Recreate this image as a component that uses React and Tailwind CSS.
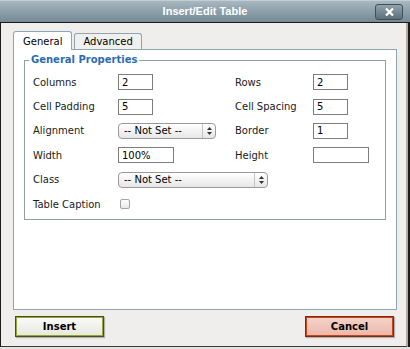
import React from 'react';

/* ── small form pieces ─────────────────────────────── */
function TextBox({ value = '', width }) {
    return (
        <input
            type="text"
            value={value}
            readOnly
            className={`${width} h-[16px] border border-[#7d7d7d] bg-white pl-[3px] text-[10px] leading-[14px] text-black outline-none`}
        />
    );
}

function SelectBox({ width, label = '-- Not Set --' }) {
    return (
        <div
            className={`${width} h-[16px] flex items-center rounded-[4px] border border-[#9a9a9a] bg-gradient-to-b from-white to-[#e6e6e6] text-[10px] text-black`}
        >
            <span className="flex-1 pl-[5px] leading-[14px]">{label}</span>
            <span className="w-[13px] h-full flex items-center justify-center border-l border-[#c4c4c4]">
                <svg width="5" height="8" viewBox="0 0 5 8">
                    <path d="M2.5 0 L5 3 L0 3 Z" fill="#333" />
                    <path d="M2.5 8 L5 5 L0 5 Z" fill="#333" />
                </svg>
            </span>
        </div>
    );
}

function Label({ children }) {
    return <span className="text-[10px] text-[#1a1a1a]">{children}</span>;
}

export default function App() {
    return (
        <div className="w-[410px] h-[349px] flex flex-col bg-[#1b1b1b] font-['DejaVu_Sans',sans-serif]">
            {/* ── Title bar ─────────────────────────────── */}
            <div className="h-[22px] relative flex items-center justify-center bg-gradient-to-b from-[#a9b8c0] via-[#8c9faa] to-[#768a96] border-t border-[#c3ced4]">
                <span className="text-[11px] font-bold text-white font-['Liberation_Sans',sans-serif]">Insert/Edit Table</span>
                <button
                    type="button"
                    className="absolute right-[7px] top-[3px] w-[28px] h-[16px] flex items-center justify-center rounded-[3px] border border-[#3f505a] bg-gradient-to-b from-[#91a3ad] to-[#5d707b]"
                >
                    <svg width="9" height="8" viewBox="0 0 9 8">
                        <path d="M1 0.5 L8 7.5 M8 0.5 L1 7.5" stroke="#fff" strokeWidth="2.2" />
                    </svg>
                </button>
            </div>

            {/* ── Body ──────────────────────────────────── */}
            <div className="mt-[1px] flex-1 flex">
                <div className="w-[407px] ml-[1px] bg-[#efeeec] border-r-[2px] border-b border-r-[#b9a99b] border-b-[#3a3a3a] pl-[12px] pt-[8px] flex flex-col">
                    {/* Tabs */}
                    <div className="flex items-end gap-[2px] h-[18px]">
                        <div className="relative z-10 h-[19px] mb-[-1px] px-[9px] flex items-center rounded-t-[3px] border border-b-0 border-[#8fa5b1] bg-white text-[10px] text-black">
                            General
                        </div>
                        <div className="h-[16px] px-[8px] flex items-center rounded-t-[3px] border border-b-0 border-[#8fa5b1] bg-[#f0f0ee] text-[10px] text-black">
                            Advanced
                        </div>
                    </div>

                    {/* Panel */}
                    <div className="w-[384px] h-[261px] border border-[#8fa5b1] bg-white px-[10px]">
                        <fieldset className="mt-[3px] border border-[#949f9f] px-[8px]">
                            <legend className="ml-[-4px] px-[2px] text-[10px] leading-[14px] font-bold text-[#2b6cb0]">
                                General Properties
                            </legend>
                            <div className="pt-[3px] pb-[3px] grid grid-cols-[85px_117px_78px_1fr] auto-rows-[24.4px] items-center">
                                <Label>Columns</Label>
                                <TextBox value="2" width="w-[35px]" />
                                <Label>Rows</Label>
                                <TextBox value="2" width="w-[35px]" />

                                <Label>Cell Padding</Label>
                                <TextBox value="5" width="w-[35px]" />
                                <Label>Cell Spacing</Label>
                                <TextBox value="5" width="w-[35px]" />

                                <Label>Alignment</Label>
                                <SelectBox width="w-[98px]" />
                                <Label>Border</Label>
                                <TextBox value="1" width="w-[35px]" />

                                <Label>Width</Label>
                                <TextBox value="100%" width="w-[56px]" />
                                <Label>Height</Label>
                                <TextBox value="" width="w-[56px]" />

                                <Label>Class</Label>
                                <div className="col-span-3">
                                    <SelectBox width="w-[150px]" />
                                </div>

                                <Label>Table Caption</Label>
                                <div className="col-span-3 pl-[2px]">
                                    <div className="w-[10px] h-[10px] rounded-[2px] border border-[#a3a3a3] bg-gradient-to-b from-white to-[#e8e8e8]" />
                                </div>
                            </div>
                        </fieldset>
                    </div>

                    {/* Buttons */}
                    <div className="mt-[6px] w-[384px] pl-[2px] pr-[3px] flex justify-between">
                        <button
                            type="button"
                            className="w-[89px] h-[21px] border border-[#46511a] shadow-[inset_0_0_0_1px_#95a637,1px_1px_1px_rgba(0,0,0,0.25)] bg-gradient-to-b from-[#fbfbf8] to-[#e6e7df] text-[10px] font-bold text-black"
                        >
                            Insert
                        </button>
                        <button
                            type="button"
                            className="w-[89px] h-[21px] border border-[#7e2a10] shadow-[inset_0_0_0_1px_#c9461c,1px_1px_1px_rgba(0,0,0,0.25)] bg-gradient-to-b from-[#f6d4cb] to-[#eab7aa] text-[10px] font-bold text-black"
                        >
                            Cancel
                        </button>
                    </div>
                </div>
            </div>
            <div className="h-[2px] bg-[#e4e3e1]" />
        </div>
    );
}
